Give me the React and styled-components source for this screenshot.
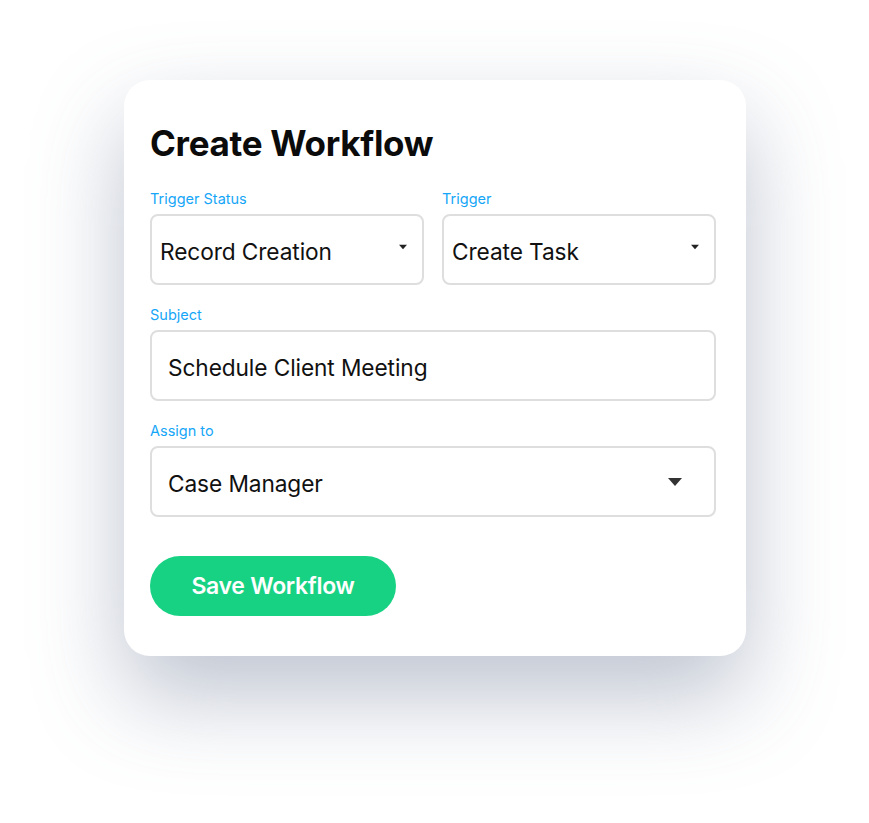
import React from 'react'
import styled, { createGlobalStyle } from 'styled-components'

const Global = createGlobalStyle`
    html, body {
        margin: 0;
        padding: 0;
        background: #ffffff;
    }
    body {
        font-family: Inter, "Noto Sans", sans-serif;
    }
`

const Arrow = ({ big }) => (
    <svg width={big ? 14 : 8} height={big ? 8 : 6} viewBox="0 0 14 8">
        <path d="M0 0 L14 0 L7 8 Z" fill={big ? '#333' : '#222'} />
    </svg>
)

const App = () => {
    return (
        <Container>
            <Global />
            <Card>
                <Title>Create Workflow</Title>
                <Row>
                    <Field>
                        <Label>Trigger Status</Label>
                        <Box small>
                            <Value>Record Creation</Value>
                            <ArrowSlot small><Arrow /></ArrowSlot>
                        </Box>
                    </Field>
                    <Field>
                        <Label>Trigger</Label>
                        <Box small>
                            <Value>Create Task</Value>
                            <ArrowSlot small><Arrow /></ArrowSlot>
                        </Box>
                    </Field>
                </Row>
                <Field>
                    <Label>Subject</Label>
                    <Box>
                        <Value>Schedule Client Meeting</Value>
                    </Box>
                </Field>
                <Field>
                    <Label>Assign to</Label>
                    <Box>
                        <Value>Case Manager</Value>
                        <ArrowSlot><Arrow big /></ArrowSlot>
                    </Box>
                </Field>
                <Button>Save Workflow</Button>
            </Card>
        </Container>
    )
}

export default App

const Button = styled.button`
    align-self: flex-start;
    margin-top: 39px;
    width: 246px;
    height: 60px;
    border: none;
    border-radius: 30px;
    background: #18d284;
    color: #ffffff;
    font-family: Inter, sans-serif;
    font-size: 23px;
    font-weight: 600;
    letter-spacing: -0.3px;
    cursor: pointer;
`
const ArrowSlot = styled.span`
    display: flex;
    align-items: center;
    margin-left: auto;
    margin-right: ${p => (p.small ? '15px' : '32px')};
    margin-top: ${p => (p.small ? '-6px' : '0')};
`
const Value = styled.span`
    font-size: 22.7px;
    color: #111;
    letter-spacing: -0.1px;
    padding-top: 3px;
`
const Box = styled.div`
    box-sizing: border-box;
    height: 71px;
    display: flex;
    align-items: center;
    padding-left: ${p => (p.small ? '8px' : '16px')};
    border: 2px solid #dedede;
    border-radius: 8px;
    background: #fff;
`
const Label = styled.div`
    font-size: 14.5px;
    line-height: 18px;
    color: #16a6f7;
    margin-bottom: 6px;
`
const Field = styled.div`
    display: flex;
    flex-direction: column;
    flex: 1;
`
const Row = styled.div`
    display: flex;
    gap: 18px;
`
const Title = styled.h1`
    margin: 0 0 26px;
    font-size: 35px;
    line-height: 42px;
    font-weight: 700;
    color: #0b0b0b;
    letter-spacing: -0.3px;
`
const Card = styled.div`
    box-sizing: border-box;
    width: 622px;
    height: 576px;
    margin: 80px 0 0 124px;
    padding: 42px 30px 40px 26px;
    display: flex;
    flex-direction: column;
    background: #ffffff;
    border-radius: 26px;
    box-shadow: 0 40px 90px rgba(110, 125, 150, 0.45);

    & > ${Field}, & > ${Row} + ${Field} {
        margin-top: 21px;
    }
`
const Container = styled.div`
    width: 100%;
    min-height: 823px;
    overflow: hidden;
`
